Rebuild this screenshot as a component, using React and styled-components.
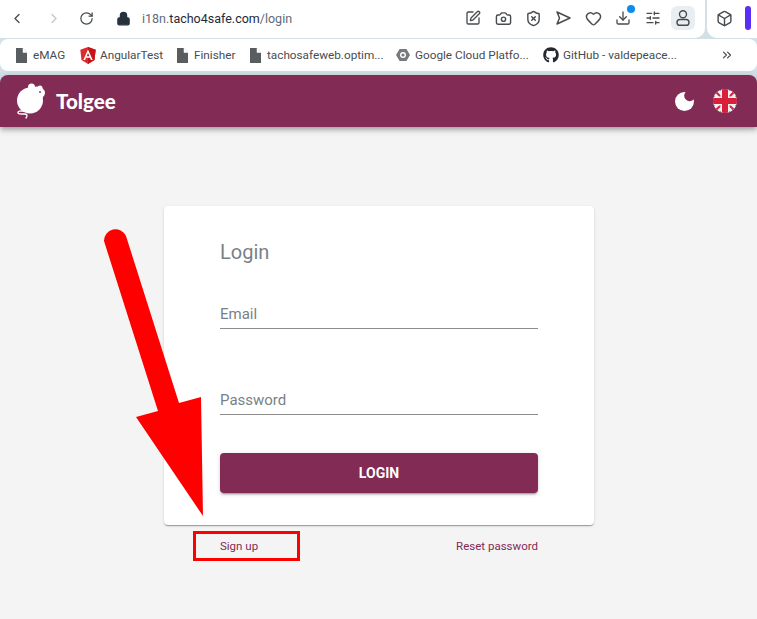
import React from "react";
import styled, { createGlobalStyle } from "styled-components";
import { ChevronLeft, ChevronRight, RotateCw, Lock, SquarePen, Camera, ShieldX, Heart, Download, SlidersHorizontal, Box, ChevronsRight } from "lucide-react";
import { FaGithub } from "react-icons/fa";

const Global = createGlobalStyle`
  html, body { margin: 0; padding: 0; height: 100%; }
  body { background: #d3e0e8; font-family: Roboto, "Noto Sans", sans-serif; overflow: hidden; }
`;

const Page = styled.div`
  position: relative;
  width: 757px;
  height: 619px;
  display: flex;
  flex-direction: column;
  overflow: hidden;
`;

/* browser chrome */
const TopRow = styled.div`
  display: flex;
  height: 38px;
  gap: 2px;
  flex-shrink: 0;
`;
const Toolbar = styled.div`
  flex: 1;
  display: flex;
  align-items: center;
  background: #fff;
  border-radius: 0 0 10px 0;
  padding: 0 10px 2px 9px;
`;
const NavButton = styled.span`
  display: flex;
  width: 16px;
  justify-content: center;
  margin-right: ${(p) => p.$gap}px;
  color: ${(p) => p.$color || "#474c50"};
`;
const LockWrap = styled.span`
  display: flex;
  margin-left: 7px;
`;
const UrlText = styled.span`
  font-size: 12.5px;
  color: #5f6b76;
  margin-left: 11px;
  b { font-weight: 400; color: #1f2a33; }
`;
const ToolIcons = styled.div`
  margin-left: auto;
  display: flex;
  align-items: center;
  gap: 6px;
`;
const ToolIcon = styled.span`
  position: relative;
  width: 24px;
  height: 24px;
  border-radius: 6px;
  display: flex;
  align-items: center;
  justify-content: center;
  color: #474c50;
  background: ${(p) => (p.$active ? "#e9eef2" : "transparent")};
`;
const Dot = styled.span`
  position: absolute;
  top: -1px;
  right: 0;
  width: 8px;
  height: 8px;
  border-radius: 50%;
  background: #0a8cf0;
`;
const ExtPanel = styled.div`
  width: 50px;
  background: #fff;
  border-radius: 0 0 0 10px;
  display: flex;
  align-items: center;
  padding: 0 0 2px 9px;
  gap: 12px;
  box-sizing: border-box;
  color: #474c50;
`;
const ExtBar = styled.span`
  width: 6px;
  height: 24px;
  border-radius: 3px;
  background: #5b2ef5;
`;
const Bookmarks = styled.div`
  height: 32px;
  margin-top: 1px;
  background: #fff;
  border-radius: 8px;
  display: flex;
  align-items: center;
  padding-left: 15px;
  flex-shrink: 0;
  font-size: 11.75px;
  color: #474c50;
`;
const Bookmark = styled.span`
  display: flex;
  align-items: center;
  gap: ${(p) => p.$gap ?? 5}px;
  width: ${(p) => p.$w}px;
  white-space: nowrap;
  color: #474c50;
`;
const More = styled.span`
  margin-left: auto;
  margin-right: 23px;
  display: flex;
  color: #474c50;
`;

/* app */
const AppBar = styled.header`
  margin-top: 4px;
  height: 52px;
  flex-shrink: 0;
  background: #822b55;
  border-radius: 8px 8px 0 0;
  display: flex;
  align-items: center;
  padding: 0 20px 0 16px;
  box-shadow: 0 2px 4px -1px rgba(0,0,0,.2), 0 4px 5px 0 rgba(0,0,0,.14), 0 1px 10px 0 rgba(0,0,0,.12);
  position: relative;
`;
const Brand = styled.span`
  font-family: "Lato", sans-serif;
  font-weight: 900;
  font-size: 20.5px;
  color: #fff;
  margin-left: 11px;
`;
const BarRight = styled.div`
  margin-left: auto;
  display: flex;
  align-items: center;
  gap: 19px;
`;
const Content = styled.main`
  flex: 1;
  background: #f4f4f4;
  display: flex;
  flex-direction: column;
  padding: 79px 163px 0 164px;
`;
const Card = styled.section`
  height: 319px;
  box-sizing: border-box;
  background: #fff;
  border-radius: 4px;
  padding: 31px 56px 0;
  box-shadow: 0 2px 1px -1px rgba(0,0,0,.2), 0 1px 1px 0 rgba(0,0,0,.14), 0 1px 3px 0 rgba(0,0,0,.12);
  display: flex;
  flex-direction: column;
`;
const Title = styled.h1`
  margin: 0;
  font-size: 20px;
  line-height: 30px;
  font-weight: 400;
  color: #7a7f87;
`;
const Field = styled.div`
  margin-top: ${(p) => p.$top}px;
  height: 27px;
  box-sizing: border-box;
  padding-top: 1px;
  border-bottom: 1px solid #8d8d8d;
  font-size: 15px;
  line-height: 22px;
  color: #7a7f87;
`;
const LoginButton = styled.button`
  margin-top: 38px;
  height: 40px;
  border: 0;
  border-radius: 4px;
  background: #822b55;
  color: #fff;
  font-family: inherit;
  font-size: 14px;
  font-weight: 700;
  box-shadow: 0 3px 1px -2px rgba(0,0,0,.2), 0 2px 2px 0 rgba(0,0,0,.14), 0 1px 5px 0 rgba(0,0,0,.12);
`;
const Links = styled.div`
  display: flex;
  justify-content: space-between;
  padding: 12px 56px 0;
  font-size: 11.5px;
  line-height: 18px;
  color: #822b55;
`;

/* annotations drawn over the screenshot */
const Highlight = styled.div`
  position: absolute;
  left: 193px;
  top: 531px;
  width: 107px;
  height: 30px;
  box-sizing: border-box;
  border: 3px solid #ff0000;
`;
const ArrowLayer = styled.svg`
  position: absolute;
  left: 0;
  top: 0;
  pointer-events: none;
`;

const PageIcon = () => (
  <svg width="13" height="15" viewBox="0 0 13 15"><path d="M1 0h7l4 4.500V15H1z" fill="#5a5d60" /><path d="M8 0v4.500h4z" fill="#fff" stroke="#fff" strokeWidth=".5" /></svg>
);
const AngularIcon = () => (
  <svg width="16" height="17" viewBox="0 0 16 17">
    <path d="M8 0 .3 2.800l1.200 10.200L8 17l6.500-4 1.200-10.200z" fill="#dd2c2c" />
    <path d="M8 0v17l6.500-4 1.200-10.200z" fill="#c3151b" />
    <path d="M8 2.500 3.300 13h1.800l.9-2.300h4l.9 2.300h1.800zm0 3.600 1.400 3.200H6.600z" fill="#fff" />
  </svg>
);
const CloudIcon = () => (
  <svg width="14" height="14" viewBox="0 0 14 14">
    <path d="M3.600 1h6.800L14 7l-3.600 6H3.600L0 7z" fill="#77797c" />
    <circle cx="7" cy="7" r="3" fill="#fff" />
    <circle cx="7" cy="7" r="1.600" fill="#77797c" />
  </svg>
);
const SendIcon = () => (
  <svg width="18" height="18" viewBox="0 0 18 18" fill="none" stroke="currentColor" strokeWidth="1.500" strokeLinejoin="round"><path d="M3 3l13 6-13 6 2.500-6z" /></svg>
);
const ProfileIcon = () => (
  <svg width="18" height="18" viewBox="0 0 18 18" fill="none" stroke="currentColor" strokeWidth="1.400">
    <circle cx="9" cy="5.200" r="3.500" />
    <rect x="3" y="10.500" width="12" height="5.800" rx="2.900" />
  </svg>
);
const MouseLogo = () => (
  <svg width="29" height="36" viewBox="0 0 29 36">
    <ellipse cx="14" cy="17.500" rx="13" ry="13" fill="#fff" />
    <ellipse cx="21" cy="10" rx="8" ry="6.500" fill="#fff" />
    <circle cx="15.500" cy="4" r="3.500" fill="#fff" />
    <circle cx="24" cy="5" r="2.500" fill="#fff" />
    <circle cx="24" cy="9" r=".9" fill="#822b55" />
    <path d="M8 28c-3 0-6-.500-6 1.500s4 1.500 6 1.500c3 0 4 1 2 4" fill="none" stroke="#fff" strokeWidth="1.400" strokeLinecap="round" />
  </svg>
);
const MoonIcon = () => (
  <svg width="19" height="19" viewBox="0 0 19 19">
    <circle cx="9.500" cy="9.500" r="9.500" fill="#fff" />
    <circle cx="14.700" cy="3.700" r="5.500" fill="#822b55" />
  </svg>
);
const FlagIcon = () => (
  <svg width="24" height="24" viewBox="0 0 24 24">
    <defs><clipPath id="flagClip"><circle cx="12" cy="12" r="12" /></clipPath></defs>
    <g clipPath="url(#flagClip)">
      <rect width="24" height="24" fill="#1c2f78" />
      <path d="M0 0 24 24M24 0 0 24" stroke="#f0f0f0" strokeWidth="8" />
      <path d="M0 0 24 24M24 0 0 24" stroke="#d8203a" strokeWidth="2" />
      <path d="M12 0v24M0 12h24" stroke="#f0f0f0" strokeWidth="9" />
      <path d="M12 0v24M0 12h24" stroke="#d8203a" strokeWidth="6" />
    </g>
  </svg>
);

export default function App() {
  return (
    <Page>
      <Global />
      <TopRow>
        <Toolbar>
          <NavButton $gap={21}><ChevronLeft size={17} /></NavButton>
          <NavButton $gap={16} $color="#c4c7ca"><ChevronRight size={17} /></NavButton>
          <NavButton $gap={15}><RotateCw size={15} /></NavButton>
          <LockWrap><Lock size={15} fill="#27323c" color="#27323c" /></LockWrap>
          <UrlText>i18n.<b>tacho4safe.com</b>/login</UrlText>
          <ToolIcons>
            <ToolIcon><SquarePen size={16} /></ToolIcon>
            <ToolIcon><Camera size={17} /></ToolIcon>
            <ToolIcon><ShieldX size={17} /></ToolIcon>
            <ToolIcon><SendIcon /></ToolIcon>
            <ToolIcon><Heart size={17} /></ToolIcon>
            <ToolIcon><Download size={16} /><Dot /></ToolIcon>
            <ToolIcon><SlidersHorizontal size={16} /></ToolIcon>
            <ToolIcon $active><ProfileIcon /></ToolIcon>
          </ToolIcons>
        </Toolbar>
        <ExtPanel>
          <Box size={17} />
          <ExtBar />
        </ExtPanel>
      </TopRow>
      <Bookmarks>
        <Bookmark $w={65}><PageIcon />eMAG</Bookmark>
        <Bookmark $w={96} $gap={4}><AngularIcon />AngularTest</Bookmark>
        <Bookmark $w={73}><PageIcon />Finisher</Bookmark>
        <Bookmark $w={147}><PageIcon />tachosafeweb.optim...</Bookmark>
        <Bookmark $w={147}><CloudIcon />Google Cloud Platfo...</Bookmark>
        <Bookmark $w={140} $gap={4}><FaGithub size={16} color="#24292e" />GitHub - valdepeace...</Bookmark>
        <More><ChevronsRight size={14} /></More>
      </Bookmarks>
      <AppBar>
        <MouseLogo />
        <Brand>Tolgee</Brand>
        <BarRight>
          <MoonIcon />
          <FlagIcon />
        </BarRight>
      </AppBar>
      <Content>
        <Card>
          <Title>Login</Title>
          <Field $top={35}>Email</Field>
          <Field $top={59}>Password</Field>
          <LoginButton>LOGIN</LoginButton>
        </Card>
        <Links>
          <span>Sign up</span>
          <span>Reset password</span>
        </Links>
      </Content>
      <Highlight />
      <ArrowLayer width="757" height="619" viewBox="0 0 757 619">
        <path d="M104 241a11.500 11.500 0 0 1 22-5L179 403l22-6 2 119-67-99 22-6z" fill="#ff0000" />
      </ArrowLayer>
    </Page>
  );
}
